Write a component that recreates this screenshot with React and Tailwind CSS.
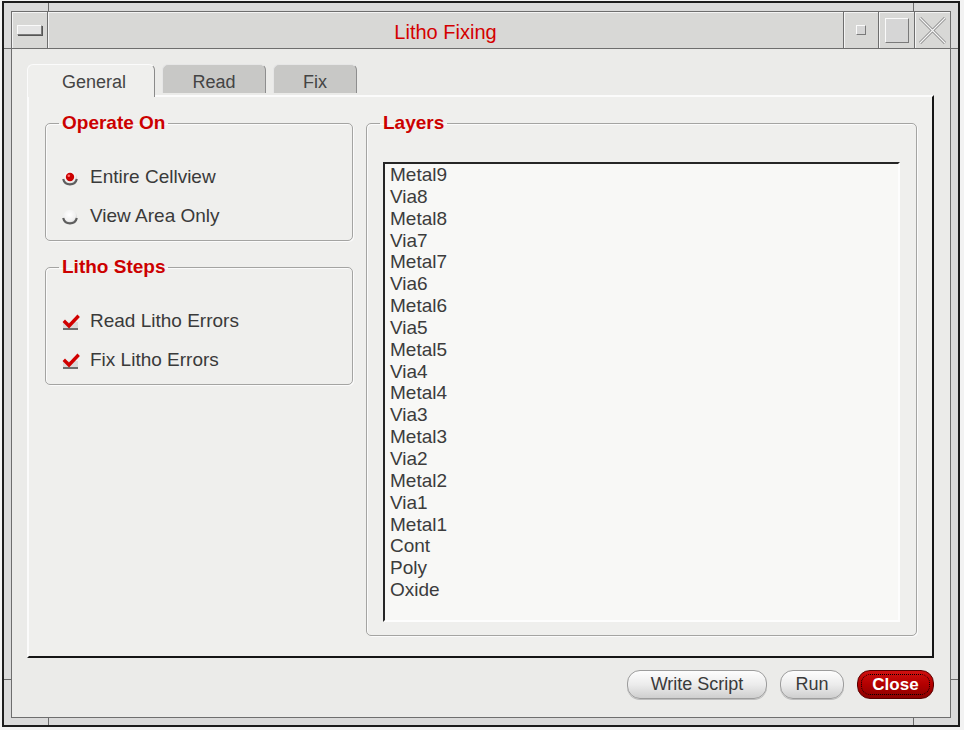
import React from "react";

const layers = [
  "Metal9", "Via8", "Metal8", "Via7", "Metal7", "Via6", "Metal6", "Via5", "Metal5", "Via4",
  "Metal4", "Via3", "Metal3", "Via2", "Metal2", "Via1", "Metal1", "Cont", "Poly", "Oxide",
];

function Radio({ checked }) {
  const id = checked ? "rg1" : "rg2";
  return (
    <svg width="16" height="16" viewBox="0 0 16 16" className="shrink-0">
      <defs>
        <radialGradient id={id} cx="45%" cy="35%" r="65%">
          <stop offset="0%" stopColor="#ffffff" />
          <stop offset="65%" stopColor="#f0f0f0" />
          <stop offset="100%" stopColor="#c4c4c4" />
        </radialGradient>
      </defs>
      <circle cx="8" cy="8" r="7.2" fill={`url(#${id})`} />
      <path d="M1.2 9 A7 7 0 0 0 14.8 9" fill="none" stroke="#5e5e5e" strokeWidth="2.2" />
      {checked && <circle cx="8" cy="7" r="4.2" fill="#cc0000" />}
      {checked && <circle cx="6.8" cy="5.8" r="1.3" fill="#ff7070" />}
    </svg>
  );
}

function Check() {
  return (
    <svg width="18" height="17" viewBox="0 0 18 17" className="shrink-0">
      <rect x="1" y="9" width="15" height="7" fill="#dadada" />
      <rect x="1" y="15" width="15" height="2" fill="#6e6e6e" />
      <path d="M3 9 L7 13 L15.5 4" fill="none" stroke="#d10000" strokeWidth="3.4" strokeLinecap="square" />
    </svg>
  );
}

function Fieldset({ title, children, className = "" }) {
  return (
    <fieldset className={`border border-[#a4a4a2] rounded-[5px] shadow-[inset_1px_1px_0_#fbfbfb,1px_1px_0_#fbfbfb] ${className}`}>
      <legend className="ml-[13px] px-[3px] text-[19px] leading-[22px] font-bold text-[#cc0000]">{title}</legend>
      {children}
    </fieldset>
  );
}

export default function App() {
  return (
    <div
      className="w-[964px] h-[730px] bg-[#f2f2f2] pl-[2px] pt-[1px] text-[#3a3a3a]"
      style={{ fontFamily: '"Liberation Sans", Arial, sans-serif' }}
    >
      <div className="relative w-[958px] h-[726px] border-2 border-[#1c1c1c] bg-[#dadada] px-[7px] pt-[8px] pb-[7px]">
        {/* frame handles */}
        <div className="absolute left-[44px] top-0 w-px h-[8px] bg-[#6a6a6a]" />
        <div className="absolute left-[909px] top-0 w-px h-[8px] bg-[#6a6a6a]" />
        <div className="absolute left-[44px] bottom-0 w-px h-[7px] bg-[#6a6a6a]" />
        <div className="absolute left-[909px] bottom-0 w-px h-[7px] bg-[#6a6a6a]" />
        <div className="absolute left-0 top-[45px] w-[7px] h-px bg-[#6a6a6a]" />
        <div className="absolute right-0 top-[45px] w-[7px] h-px bg-[#6a6a6a]" />
        <div className="absolute left-0 top-[676px] w-[7px] h-px bg-[#6a6a6a]" />
        <div className="absolute right-0 top-[676px] w-[7px] h-px bg-[#6a6a6a]" />

        <div className="w-full h-full border border-[#6e6e6e] flex flex-col bg-[#ebebe9]">
          {/* title bar */}
          <div className="h-[37px] shrink-0 flex border-b border-[#6e6e6e] bg-[#d8d8d6]">
            <div className="w-[36px] border-r border-[#6e6e6e] flex items-center justify-center shadow-[inset_1px_1px_0_#f4f4f4]">
              <div className="w-[25px] h-[10px] border border-[#7a7a7a] border-t-[#fafafa] border-l-[#fafafa] bg-[#e4e4e4] shadow-[1px_1px_0_#555]" />
            </div>
            <div className="flex-1 flex items-center justify-center pt-[3px] text-[20px] text-[#d40000] shadow-[inset_1px_1px_0_#f4f4f4]">
              Litho Fixing
            </div>
            <div className="w-[35px] border-l border-[#6e6e6e] flex items-center justify-center shadow-[inset_1px_1px_0_#f4f4f4]">
              <div className="w-[10px] h-[10px] border border-[#fafafa] border-r-[#7a7a7a] border-b-[#7a7a7a] bg-[#d6d6d6]" />
            </div>
            <div className="w-[36px] border-l border-[#6e6e6e] flex items-center justify-center shadow-[inset_1px_1px_0_#f4f4f4]">
              <div className="w-[24px] h-[25px] border border-[#fafafa] border-r-[#7a7a7a] border-b-[#7a7a7a] bg-[#d6d6d6]" />
            </div>
            <div className="w-[36px] border-l border-[#6e6e6e] flex items-center justify-center shadow-[inset_1px_1px_0_#f4f4f4]">
              <svg width="27" height="27" viewBox="0 0 27 27">
                <path d="M1 1 L26 26 M26 1 L1 26" stroke="#8a8a8a" strokeWidth="3" />
                <path d="M1 1 L26 26 M26 1 L1 26" stroke="#f6f6f6" strokeWidth="1.2" />
              </svg>
            </div>
          </div>

          {/* content */}
          <div className="flex-1 flex flex-col px-[15px] pt-[15px]">
            {/* tabs */}
            <div className="h-[31px] flex items-start gap-[7px] text-[18px] text-[#444]">
              <div className="relative z-10 w-[128px] h-[33px] rounded-t-[6px] border border-b-0 border-[#fbfbfb] border-r-[#8a8a8a] bg-[#efefed] flex items-start justify-center pt-[4px] pl-[6px]">
                General
              </div>
              <div className="w-[104px] h-[29px] rounded-t-[6px] border border-b-0 border-[#e6e6e6] border-r-[#8e8e8e] bg-[#c8c8c6] flex items-start justify-center pt-[4px]">
                Read
              </div>
              <div className="w-[84px] h-[29px] rounded-t-[6px] border border-b-0 border-[#e6e6e6] border-r-[#8e8e8e] bg-[#c8c8c6] flex items-start justify-center pt-[4px]">
                Fix
              </div>
            </div>

            {/* panel */}
            <div className="h-[563px] w-[907px] border-2 border-[#fbfbfb] border-r-[#151515] border-b-[#151515] bg-[#efefed] flex gap-[13px] pl-[16px] pt-[15px]">
              <div className="w-[308px] flex flex-col gap-[15px] text-[19px]">
                <Fieldset title="Operate On" className="pt-[24px] pb-[4px]">
                  <div className="h-[39px] flex items-center pl-[16px] gap-[12px]">
                    <Radio checked />
                    <span>Entire Cellview</span>
                  </div>
                  <div className="h-[39px] flex items-center pl-[16px] gap-[12px]">
                    <Radio />
                    <span>View Area Only</span>
                  </div>
                </Fieldset>
                <Fieldset title="Litho Steps" className="pt-[24px] pb-[4px]">
                  <div className="h-[39px] flex items-center pl-[16px] gap-[10px]">
                    <Check />
                    <span>Read Litho Errors</span>
                  </div>
                  <div className="h-[39px] flex items-center pl-[16px] gap-[10px]">
                    <Check />
                    <span>Fix Litho Errors</span>
                  </div>
                </Fieldset>
              </div>

              <Fieldset title="Layers" className="w-[551px] self-start pt-[28px] pb-[13px]">
                <div className="mx-[16px] h-[460px] border-2 border-[#262626] border-r-[#fdfdfd] border-b-[#fdfdfd] bg-[#f8f8f6] px-[5px] text-[19px] leading-[21.85px] text-[#3c3c3c]">
                  {layers.map((l) => (
                    <div key={l}>{l}</div>
                  ))}
                </div>
              </Fieldset>
            </div>

            {/* buttons */}
            <div className="mt-[12px] w-[907px] flex justify-end gap-[13px] text-[18px]">
              <button className="w-[140px] h-[29px] rounded-[13px] border border-[#9c9c9c] bg-gradient-to-b from-[#fdfdfd] via-[#ececec] to-[#cfcfcf] text-[#3a3a3a] shadow-[0_1px_0_#bdbdbd]">
                Write Script
              </button>
              <button className="w-[64px] h-[29px] rounded-[13px] border border-[#9c9c9c] bg-gradient-to-b from-[#fdfdfd] via-[#ececec] to-[#cfcfcf] text-[#3a3a3a] shadow-[0_1px_0_#bdbdbd]">
                Run
              </button>
              <button className="w-[77px] h-[29px] rounded-[13px] border border-[#5a0000] bg-gradient-to-b from-[#d01010] via-[#b30000] to-[#8c0000] p-[3px]">
                <span className="flex h-full w-full items-center justify-center rounded-[9px] border border-dotted border-black text-[17px] font-bold text-white">
                  Close
                </span>
              </button>
            </div>
          </div>
        </div>
      </div>
    </div>
  );
}
